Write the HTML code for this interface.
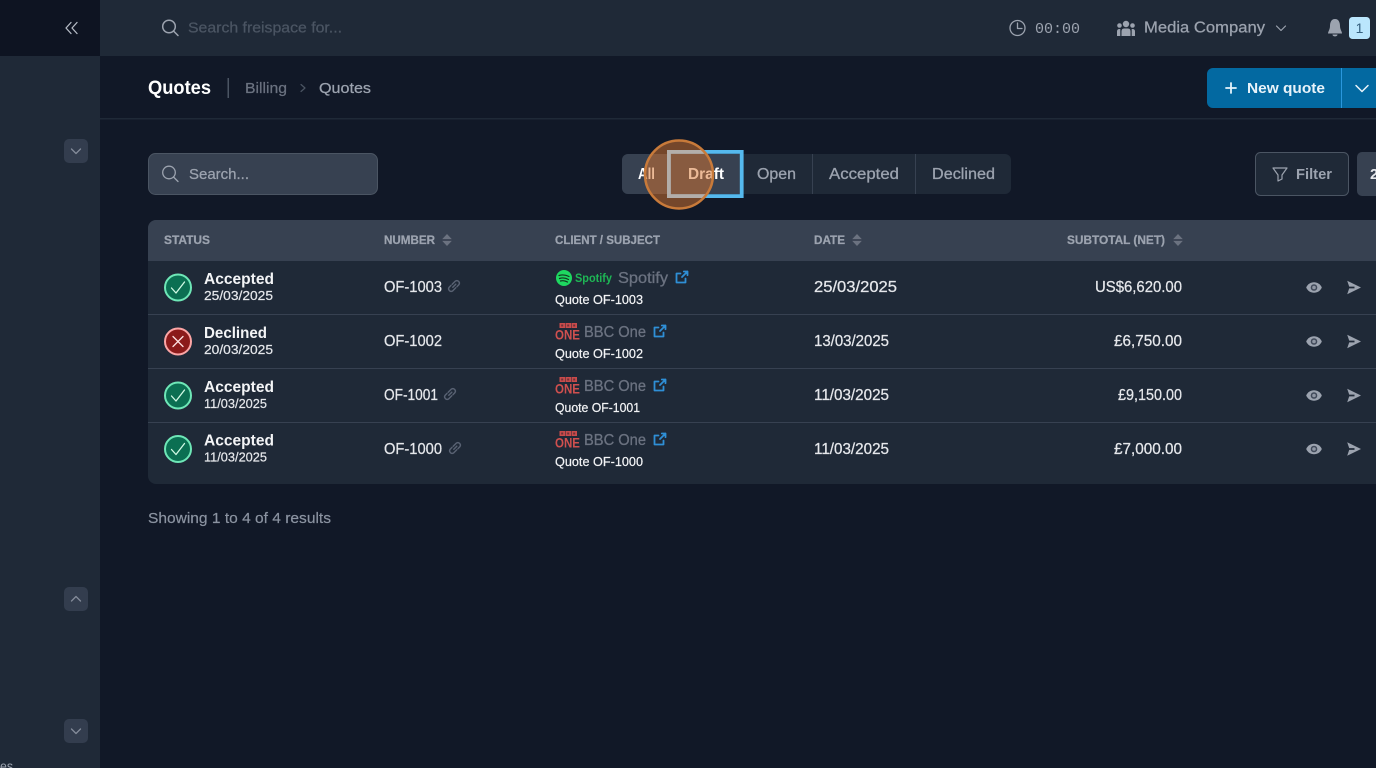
<!DOCTYPE html>
<html lang="en"><head><meta charset="utf-8"><title>Quotes</title>
<style>
html,body{margin:0;padding:0;background:#111827;width:1376px;height:768px;overflow:hidden}
svg{display:block;filter:blur(.35px)}
text{font-family:"Liberation Sans",sans-serif;white-space:pre}
.a{font-size:15.5px;font-weight:bold;fill:#f3f4f6}
.d{font-size:12.5px;fill:#e5e7eb;stroke:#e5e7eb;stroke-width:.2px}
.n{font-size:15.5px;fill:#e5e7eb;stroke:#e5e7eb;stroke-width:.25px}
.q{font-size:12.5px;fill:#f3f4f6;stroke:#f3f4f6;stroke-width:.2px}
.c{font-size:15.5px;fill:#6b7280;stroke:#6b7280;stroke-width:.3px}
.h{font-size:11.5px;font-weight:bold;fill:#9ca3af;stroke:#9ca3af;stroke-width:.25px}
.t{font-size:15.5px;fill:#9ca3af;stroke:#9ca3af;stroke-width:.3px}
.r{stroke:#9ca3af;stroke-width:.25px}
.ln{fill:none;stroke-linecap:round;stroke-linejoin:round}
</style></head><body>
<svg width="1376" height="768" viewBox="0 0 1376 768" xmlns="http://www.w3.org/2000/svg">
<defs>
<clipPath id="cc"><circle cx="679" cy="174.500" r="34"/></clipPath>
<g id="ok"><circle r="13" fill="#0b6f52" stroke="#6ee7b7" stroke-width="2"/><path d="M-6.500 .5L-2 5.500L6.500-5.500" class="ln" stroke="#d1fae5" stroke-width="1.300"/></g>
<g id="no"><circle r="13" fill="#8b1a1a" stroke="#fca5a5" stroke-width="2"/><path d="M-5-5L5 5M5-5L-5 5" class="ln" stroke="#fee2e2" stroke-width="1.300"/></g>
<g id="sort"><path d="M0-6L4.800-.9H-4.800ZM0 6L4.800 .9H-4.800Z" fill="#6b7280"/></g>
<g id="eye"><path d="M-7.800 0C-5-7 5-7 7.800 0C5 7-5 7-7.800 0Z" fill="#9ca3af"/><circle r="3.300" fill="#414a5a"/><circle r="1.800" fill="#8f96a3"/></g>
<g id="send"><path d="M-6.800-6.700L7 0L-6.800 6.700L-4.800 .9H.5V-.9H-4.800Z" fill="#9ca3af"/></g>
<g id="ext"><path d="M-1.500-3.500H-5.500V5.500H3.500V1.500M0 0L5.500-5.500M1.800-5.500H5.500V-1.800" class="ln" stroke="#2f8fd6" stroke-width="1.800"/></g>
<g id="chain"><g transform="scale(1.200)"><path d="M-1 1L1.500-1.500M-1.500-1.500L1-4C3-5.500 5.500-3 4-1L2.500.5M1.500 1.500L-1 4C-3 5.500-5.500 3-4 1L-2.500-.5" class="ln" stroke="#596273" stroke-width="1.200"/></g></g>
<g id="bbc"><g fill="#c84b4b"><rect x="4.500" y="-2" width="5.500" height="5"/><rect x="10.500" y="-2" width="5.500" height="5"/><rect x="16.500" y="-2" width="5.500" height="5"/></g><g fill="#6f3238"><rect x="6.200" y="-.5" width="2" height="2"/><rect x="12.200" y="-.5" width="2" height="2"/><rect x="18.200" y="-.5" width="2" height="2"/></g><text x="0" y="14.700" font-size="14" font-weight="bold" fill="#d0504f" textLength="25" lengthAdjust="spacingAndGlyphs">ONE</text></g>
<g id="sdn"><rect x="-12" y="-12" width="24" height="24" rx="5" fill="#333d4e"/><path d="M-4.500-2L0 2.500L4.500-2" class="ln" stroke="#848c9a" stroke-width="1.300"/></g>
<g id="sup"><rect x="-12" y="-12" width="24" height="24" rx="5" fill="#333d4e"/><path d="M-4.500 2L0-2.500L4.500 2" class="ln" stroke="#848c9a" stroke-width="1.300"/></g>
</defs>

<rect width="1376" height="768" fill="#111827"/>
<!-- sidebar -->
<rect x="0" y="0" width="100" height="768" fill="#1f2937"/>
<rect x="0" y="0" width="100" height="56" fill="#0e1422"/>
<path d="M71 22.500L66 28L71 33.500M77 22.500L72 28L77 33.500" class="ln" stroke="#b6bcc6" stroke-width="1.300"/>
<use href="#sdn" x="76" y="151"/><use href="#sup" x="76" y="599"/><use href="#sdn" x="76" y="731"/>
<text x="0" y="771" font-size="14" fill="#9ca3af" textLength="13" lengthAdjust="spacingAndGlyphs">es</text>

<!-- top bar -->
<rect x="100" y="0" width="1276" height="56" fill="#1f2937"/>
<circle cx="169" cy="26.500" r="6.300" class="ln" stroke="#9ca3af" stroke-width="1.500"/><path d="M173.500 31L178 35.500" class="ln" stroke="#9ca3af" stroke-width="1.500"/>
<text x="188" y="32.500" font-size="15" fill="#4b5563" stroke="#4b5563" stroke-width=".25" textLength="154" lengthAdjust="spacingAndGlyphs">Search freispace for...</text>
<circle cx="1017.500" cy="28" r="7.500" class="ln" stroke="#9ca3af" stroke-width="1.300"/><path d="M1017.500 23V28.500H1022" class="ln" stroke="#9ca3af" stroke-width="1.300"/>
<text x="1035" y="33" font-size="15" fill="#9ca3af" style="font-family:'Liberation Mono',monospace" textLength="45" lengthAdjust="spacingAndGlyphs">00:00</text>
<g fill="#9ca3af"><circle cx="1126" cy="24" r="3.200"/><circle cx="1119.500" cy="25.500" r="2.300"/><circle cx="1132.500" cy="25.500" r="2.300"/><path d="M1121.500 36V31.500Q1121.500 28.500 1124 28.500H1128Q1130.500 28.500 1130.500 31.500V36ZM1117 36V31.500Q1117 29 1119.500 29L1120.300 29V36ZM1135 36V31.500Q1135 29 1132.500 29L1131.700 29V36Z"/></g>
<text x="1144" y="32.500" font-size="15.500" class="r" fill="#9ca3af" textLength="121" lengthAdjust="spacingAndGlyphs">Media Company</text>
<path d="M1276.500 26L1281 30.500L1285.500 26" class="ln" stroke="#9ca3af" stroke-width="1.200"/>
<path d="M1335 19C1331 19 1330 23 1330 26C1330 29.500 1328 31.500 1328 33.500H1342C1342 31.500 1340 29.500 1340 26C1340 23 1339 19 1335 19ZM1332.500 34.500H1337.500C1337.500 37 1332.500 37 1332.500 34.500Z" fill="#9ca3af"/>
<rect x="1349" y="17" width="21" height="22" rx="3.500" fill="#bae6fd"/>
<text x="1359.500" y="33" font-size="14" fill="#35607f" text-anchor="middle">1</text>

<!-- page header -->
<rect x="100" y="118" width="1276" height="1.500" fill="#1f2937"/>
<text x="148" y="94" font-size="19" font-weight="bold" fill="#fff" textLength="63" lengthAdjust="spacingAndGlyphs">Quotes</text>
<rect x="227.500" y="78" width="1.500" height="20" fill="#4b5563"/>
<text x="245" y="93" font-size="15" fill="#6b7280" stroke="#6b7280" stroke-width=".25" textLength="42" lengthAdjust="spacingAndGlyphs">Billing</text>
<path d="M301 84.500L305 88L301 91.500" class="ln" stroke="#4b5563" stroke-width="1.200"/>
<text x="319" y="93" font-size="15" class="r" fill="#9ca3af" textLength="52" lengthAdjust="spacingAndGlyphs">Quotes</text>
<path d="M1207 74a6 6 0 0 1 6-6H1376V108H1213a6 6 0 0 1-6-6Z" fill="#0369a1"/>
<rect x="1341" y="68" width="1" height="40" fill="#2a97dd"/>
<path d="M1231 83V93M1226 88H1236" class="ln" stroke="#e5f3fb" stroke-width="1.800"/>
<text x="1247" y="93" font-size="15" font-weight="bold" fill="#e8f3fa" textLength="78" lengthAdjust="spacingAndGlyphs">New quote</text>
<path d="M1356 85.500L1362 91.500L1368 85.500" class="ln" stroke="#e8f3fa" stroke-width="1.500"/>

<!-- search -->
<rect x="148.500" y="153.500" width="229" height="41" rx="7" fill="#374151" stroke="#4b5563"/>
<circle cx="169" cy="172.500" r="6.300" class="ln" stroke="#9ca3af" stroke-width="1.300"/><path d="M173.500 177L178 181.500" class="ln" stroke="#9ca3af" stroke-width="1.300"/>
<text x="189" y="179" font-size="15" class="r" fill="#9ca3af" textLength="60" lengthAdjust="spacingAndGlyphs">Search...</text>

<!-- tabs -->
<rect x="622" y="154" width="389" height="40" rx="6" fill="#1f2937"/>
<path d="M628 154H743V194H628a6 6 0 0 1-6-6V160a6 6 0 0 1 6-6Z" fill="#374151"/>
<rect x="812" y="154" width="1" height="40" fill="#374151"/><rect x="915" y="154" width="1" height="40" fill="#374151"/>
<text x="638" y="179" font-size="15.500" style="fill:#fff;font-weight:bold" textLength="17" lengthAdjust="spacingAndGlyphs">All</text>
<text x="688" y="179" font-size="15.500" style="fill:#fff;font-weight:bold" textLength="36" lengthAdjust="spacingAndGlyphs">Draft</text>
<text x="757" y="179" class="t" textLength="39" lengthAdjust="spacingAndGlyphs">Open</text>
<text x="829" y="179" class="t" textLength="70" lengthAdjust="spacingAndGlyphs">Accepted</text>
<text x="932" y="179" class="t" textLength="63" lengthAdjust="spacingAndGlyphs">Declined</text>
<rect x="668.900" y="151.900" width="72.800" height="44.200" fill="none" stroke="#55b9ee" stroke-width="3.800"/>
<circle cx="679" cy="174.500" r="34" fill="#d9762f" fill-opacity=".5"/>
<g clip-path="url(#cc)"><rect x="668.900" y="151.900" width="72.800" height="44.200" fill="none" stroke="#b3aeaa" stroke-width="3.800"/></g>
<circle cx="679" cy="174.500" r="34" fill="none" stroke="#c87a3a" stroke-width="2.500"/>

<!-- filter -->
<rect x="1255.500" y="152.500" width="93" height="43" rx="5" fill="#1f2937" stroke="#4b5563"/>
<path d="M1273 168H1287L1282 175V179L1278 181V175Z" class="ln" stroke="#9ca3af" stroke-width="1.200"/>
<text x="1296" y="179" font-size="15" font-weight="bold" fill="#9ca3af" textLength="36" lengthAdjust="spacingAndGlyphs">Filter</text>
<path d="M1376 152H1362a5 5 0 0 0-5 5V191a5 5 0 0 0 5 5H1376Z" fill="#374151"/>
<text x="1370" y="179" font-size="15" font-weight="bold" fill="#e5e7eb">2</text>

<!-- table -->
<path d="M156 220H1376V484H156a8 8 0 0 1-8-8V228a8 8 0 0 1 8-8Z" fill="#1f2937"/>
<path d="M156 220H1376V261H148V228a8 8 0 0 1 8-8Z" fill="#374151"/>
<rect x="148" y="314" width="1228" height="1" fill="#374151"/>
<rect x="148" y="368" width="1228" height="1" fill="#374151"/>
<rect x="148" y="422" width="1228" height="1" fill="#374151"/>
<text x="164" y="244" class="h" textLength="46" lengthAdjust="spacingAndGlyphs">STATUS</text>
<text x="384" y="244" class="h" textLength="51" lengthAdjust="spacingAndGlyphs">NUMBER</text><use href="#sort" x="447" y="240"/>
<text x="555" y="244" class="h" textLength="105" lengthAdjust="spacingAndGlyphs">CLIENT / SUBJECT</text>
<text x="814" y="244" class="h" textLength="31" lengthAdjust="spacingAndGlyphs">DATE</text><use href="#sort" x="857" y="240"/>
<text x="1067" y="244" class="h" textLength="98" lengthAdjust="spacingAndGlyphs">SUBTOTAL (NET)</text><use href="#sort" x="1178" y="240"/>

<!-- row 1 -->
<use href="#ok" x="178" y="287.500"/>
<text x="204" y="284" class="a" textLength="70" lengthAdjust="spacingAndGlyphs">Accepted</text>
<text x="204" y="300" class="d" textLength="69" lengthAdjust="spacingAndGlyphs">25/03/2025</text>
<text x="384" y="292" class="n" textLength="58" lengthAdjust="spacingAndGlyphs">OF-1003</text><use href="#chain" x="454" y="286"/>
<circle cx="564" cy="278" r="8" fill="#1ed760"/><path d="M559 275.500Q564 274 569 276.500M559.500 278.500Q564 277 568.500 279.500M560.500 281Q564 280 567.500 282" class="ln" stroke="#12331f" stroke-width="1.200"/>
<text x="575" y="282" font-size="12" font-weight="bold" fill="#1eb655" textLength="37" lengthAdjust="spacingAndGlyphs">Spotify</text>
<text x="618" y="283" class="c" textLength="50" lengthAdjust="spacingAndGlyphs">Spotify</text><use href="#ext" x="682" y="277"/>
<text x="555" y="304" class="q" textLength="88" lengthAdjust="spacingAndGlyphs">Quote OF-1003</text>
<text x="814" y="292" class="n" textLength="83" lengthAdjust="spacingAndGlyphs">25/03/2025</text>
<text x="1095" y="292" class="n" textLength="87" lengthAdjust="spacingAndGlyphs">US$6,620.00</text>
<use href="#eye" x="1314" y="287.500"/><use href="#send" x="1354" y="287.500"/>

<!-- row 2 -->
<use href="#no" x="178" y="341.500"/>
<text x="204" y="338" class="a" textLength="63" lengthAdjust="spacingAndGlyphs">Declined</text>
<text x="204" y="354" class="d" textLength="69" lengthAdjust="spacingAndGlyphs">20/03/2025</text>
<text x="384" y="346" class="n" textLength="58" lengthAdjust="spacingAndGlyphs">OF-1002</text>
<use href="#bbc" x="555" y="325"/>
<text x="584" y="337" class="c" textLength="62" lengthAdjust="spacingAndGlyphs">BBC One</text><use href="#ext" x="660" y="331"/>
<text x="555" y="358" class="q" textLength="88" lengthAdjust="spacingAndGlyphs">Quote OF-1002</text>
<text x="814" y="346" class="n" textLength="75" lengthAdjust="spacingAndGlyphs">13/03/2025</text>
<text x="1114" y="346" class="n" textLength="68" lengthAdjust="spacingAndGlyphs">£6,750.00</text>
<use href="#eye" x="1314" y="341.500"/><use href="#send" x="1354" y="341.500"/>

<!-- row 3 -->
<use href="#ok" x="178" y="395.500"/>
<text x="204" y="392" class="a" textLength="70" lengthAdjust="spacingAndGlyphs">Accepted</text>
<text x="204" y="408" class="d" textLength="63" lengthAdjust="spacingAndGlyphs">11/03/2025</text>
<text x="384" y="400" class="n" textLength="54" lengthAdjust="spacingAndGlyphs">OF-1001</text><use href="#chain" x="450" y="394"/>
<use href="#bbc" x="555" y="379"/>
<text x="584" y="391" class="c" textLength="62" lengthAdjust="spacingAndGlyphs">BBC One</text><use href="#ext" x="660" y="385"/>
<text x="555" y="412" class="q" textLength="85" lengthAdjust="spacingAndGlyphs">Quote OF-1001</text>
<text x="814" y="400" class="n" textLength="75" lengthAdjust="spacingAndGlyphs">11/03/2025</text>
<text x="1118" y="400" class="n" textLength="64" lengthAdjust="spacingAndGlyphs">£9,150.00</text>
<use href="#eye" x="1314" y="395.500"/><use href="#send" x="1354" y="395.500"/>

<!-- row 4 -->
<use href="#ok" x="178" y="449"/>
<text x="204" y="445.500" class="a" textLength="70" lengthAdjust="spacingAndGlyphs">Accepted</text>
<text x="204" y="461.500" class="d" textLength="63" lengthAdjust="spacingAndGlyphs">11/03/2025</text>
<text x="384" y="454" class="n" textLength="58" lengthAdjust="spacingAndGlyphs">OF-1000</text><use href="#chain" x="455" y="448"/>
<use href="#bbc" x="555" y="433"/>
<text x="584" y="445" class="c" textLength="62" lengthAdjust="spacingAndGlyphs">BBC One</text><use href="#ext" x="660" y="439"/>
<text x="555" y="466" class="q" textLength="88" lengthAdjust="spacingAndGlyphs">Quote OF-1000</text>
<text x="814" y="454" class="n" textLength="75" lengthAdjust="spacingAndGlyphs">11/03/2025</text>
<text x="1114" y="454" class="n" textLength="68" lengthAdjust="spacingAndGlyphs">£7,000.00</text>
<use href="#eye" x="1314" y="449"/><use href="#send" x="1354" y="449"/>

<text x="148" y="523" font-size="15" fill="#8b93a1" stroke="#8b93a1" stroke-width=".2" textLength="183" lengthAdjust="spacingAndGlyphs">Showing 1 to 4 of 4 results</text>
</svg>
</body></html>
